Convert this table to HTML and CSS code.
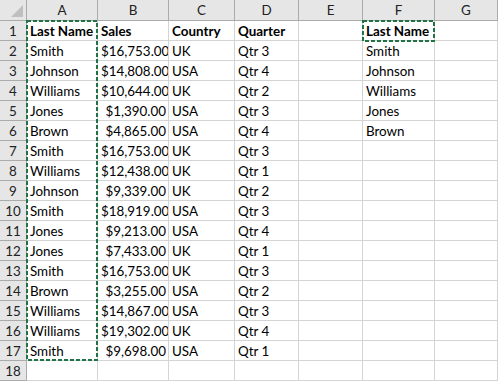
FILE: index.html
```html
<!DOCTYPE html>
<html>
<head>
<meta charset="utf-8">
<link rel="stylesheet" href="styles.css">
</head>
<body>
<div class="sheet">
  <div class="grid">
    <div class="corner"><span class="tri"></span></div>
    <div class="ch">A</div><div class="ch">B</div><div class="ch">C</div><div class="ch">D</div><div class="ch">E</div><div class="ch">F</div><div class="ch">G</div>

    <div class="rh">1</div><div class="c b">Last Name</div><div class="c b">Sales</div><div class="c b">Country</div><div class="c b">Quarter</div><div class="c"></div><div class="c b">Last Name</div><div class="c"></div>
    <div class="rh">2</div><div class="c">Smith</div><div class="c n">$16,753.00</div><div class="c">UK</div><div class="c">Qtr 3</div><div class="c"></div><div class="c">Smith</div><div class="c"></div>
    <div class="rh">3</div><div class="c">Johnson</div><div class="c n">$14,808.00</div><div class="c">USA</div><div class="c">Qtr 4</div><div class="c"></div><div class="c">Johnson</div><div class="c"></div>
    <div class="rh">4</div><div class="c">Williams</div><div class="c n">$10,644.00</div><div class="c">UK</div><div class="c">Qtr 2</div><div class="c"></div><div class="c">Williams</div><div class="c"></div>
    <div class="rh">5</div><div class="c">Jones</div><div class="c n">$1,390.00</div><div class="c">USA</div><div class="c">Qtr 3</div><div class="c"></div><div class="c">Jones</div><div class="c"></div>
    <div class="rh">6</div><div class="c">Brown</div><div class="c n">$4,865.00</div><div class="c">USA</div><div class="c">Qtr 4</div><div class="c"></div><div class="c">Brown</div><div class="c"></div>
    <div class="rh">7</div><div class="c">Smith</div><div class="c n">$16,753.00</div><div class="c">UK</div><div class="c">Qtr 3</div><div class="c"></div><div class="c"></div><div class="c"></div>
    <div class="rh">8</div><div class="c">Williams</div><div class="c n">$12,438.00</div><div class="c">UK</div><div class="c">Qtr 1</div><div class="c"></div><div class="c"></div><div class="c"></div>
    <div class="rh">9</div><div class="c">Johnson</div><div class="c n">$9,339.00</div><div class="c">UK</div><div class="c">Qtr 2</div><div class="c"></div><div class="c"></div><div class="c"></div>
    <div class="rh">10</div><div class="c">Smith</div><div class="c n">$18,919.00</div><div class="c">USA</div><div class="c">Qtr 3</div><div class="c"></div><div class="c"></div><div class="c"></div>
    <div class="rh">11</div><div class="c">Jones</div><div class="c n">$9,213.00</div><div class="c">USA</div><div class="c">Qtr 4</div><div class="c"></div><div class="c"></div><div class="c"></div>
    <div class="rh">12</div><div class="c">Jones</div><div class="c n">$7,433.00</div><div class="c">UK</div><div class="c">Qtr 1</div><div class="c"></div><div class="c"></div><div class="c"></div>
    <div class="rh">13</div><div class="c">Smith</div><div class="c n">$16,753.00</div><div class="c">UK</div><div class="c">Qtr 3</div><div class="c"></div><div class="c"></div><div class="c"></div>
    <div class="rh">14</div><div class="c">Brown</div><div class="c n">$3,255.00</div><div class="c">USA</div><div class="c">Qtr 2</div><div class="c"></div><div class="c"></div><div class="c"></div>
    <div class="rh">15</div><div class="c">Williams</div><div class="c n">$14,867.00</div><div class="c">USA</div><div class="c">Qtr 3</div><div class="c"></div><div class="c"></div><div class="c"></div>
    <div class="rh">16</div><div class="c">Williams</div><div class="c n">$19,302.00</div><div class="c">UK</div><div class="c">Qtr 4</div><div class="c"></div><div class="c"></div><div class="c"></div>
    <div class="rh">17</div><div class="c">Smith</div><div class="c n">$9,698.00</div><div class="c">USA</div><div class="c">Qtr 1</div><div class="c"></div><div class="c"></div><div class="c"></div>
    <div class="rh">18</div><div class="c"></div><div class="c"></div><div class="c"></div><div class="c"></div><div class="c"></div><div class="c"></div><div class="c"></div>
  </div>
  <svg class="ants ants-a" width="72" height="341" viewBox="0 0 72 341"><rect x="1" y="1" width="70" height="339" /></svg>
  <svg class="ants ants-f" width="73" height="22" viewBox="0 0 73 22"><rect x="1" y="1" width="71" height="20" /></svg>
</div>
</body>
</html>
```
FILE: styles.css
```css
html, body {
  margin: 0;
  padding: 0;
  background: #ffffff;
}
.sheet {
  position: relative;
  width: 498px;
  height: 381px;
  overflow: hidden;
  font-family: Lato, "Open Sans", sans-serif;
  font-size: 13.4px;
  color: #000;
}
.grid {
  display: grid;
  grid-template-columns: 27px 71px 71px 66px 64px 64px 72px 63px;
  grid-template-rows: 21px repeat(18, 20px);
}
.corner {
  position: relative;
  background: #e6e6e6;
  border-right: 1px solid #ababab;
  border-bottom: 1px solid #ababab;
  box-sizing: border-box;
}
.tri {
  position: absolute;
  right: 3px;
  bottom: 3px;
  width: 0;
  height: 0;
  border-left: 12px solid transparent;
  border-bottom: 12px solid #bfbfbf;
}
.ch {
  background: #e6e6e6;
  border-right: 1px solid #ababab;
  border-bottom: 1px solid #ababab;
  box-sizing: border-box;
  text-align: center;
  line-height: 21px;
  color: #222;
}
.rh {
  background: #e6e6e6;
  border-right: 1px solid #ababab;
  border-bottom: 1px solid #ababab;
  box-sizing: border-box;
  text-align: center;
  line-height: 20px;
  color: #222;
}
.c {
  border-right: 1px solid #d4d4d4;
  border-bottom: 1px solid #d4d4d4;
  box-sizing: border-box;
  padding: 0 2px 0 3px;
  line-height: 20px;
  white-space: nowrap;
  overflow: hidden;
}
.b { font-weight: bold; }
.n { text-align: right; }
.ants {
  position: absolute;
  fill: none;
  stroke: #217346;
  stroke-width: 2;
  stroke-dasharray: 4 2;
}
.ants-a { left: 26px; top: 20px; }
.ants-f { left: 362px; top: 20px; }
```
